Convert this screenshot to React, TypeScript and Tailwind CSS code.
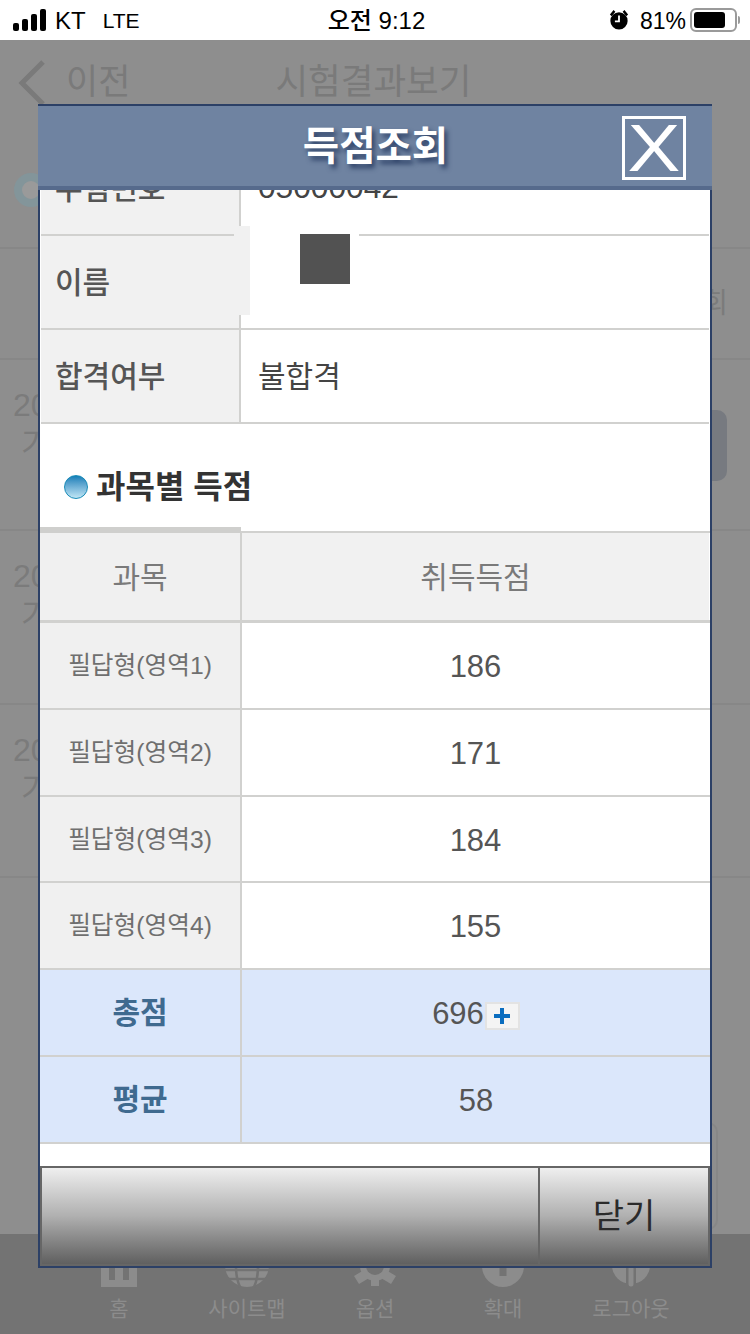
import React from "react";

const KR = '"Liberation Sans","Noto Sans CJK KR",sans-serif';

function Row({ label, value, h }: { label: string; value: React.ReactNode; h: string }) {
  return (
    <div className={`flex ${h} border-b-2 border-[#d1d1cf] mr-[1px] ml-[1px]`}>
      <div className="w-[200px] shrink-0 bg-[#f1f1f1] border-r-2 border-[#d1d1cf] flex items-center pl-[14px] text-[30px] font-medium text-[#555]">
        {label}
      </div>
      <div className="flex-1 flex items-center pl-[17px] text-[30px] text-[#444]">{value}</div>
    </div>
  );
}

function ScoreRow({ label, value, h }: { label: string; value: React.ReactNode; h: string }) {
  return (
    <div className={`flex ${h} border-b-2 border-[#d1d1cf]`}>
      <div className="w-[202px] shrink-0 bg-[#f0f0f0] border-r-2 border-[#d1d1cf] flex items-center justify-center pt-[1px] text-[24.7px] text-[#6f6f6f]">
        {label}
      </div>
      <div className="flex-1 flex items-center justify-center pt-[4px] text-[31px] text-[#555] bg-white mr-[1px]">{value}</div>
    </div>
  );
}

function TotalRow({ label, value, h }: { label: string; value: React.ReactNode; h: string }) {
  return (
    <div className={`flex ${h} border-b-2 border-[#d1d1cf] bg-[#dbe7fb]`}>
      <div className="w-[202px] shrink-0 border-r-2 border-[#d1d1cf] flex items-center justify-center text-[30px] font-bold text-[#3f6a8f]">
        {label}
      </div>
      <div className="flex-1 flex items-center justify-center pt-[4px] text-[31px] text-[#555]">{value}</div>
    </div>
  );
}

function BgRow({ h }: { h: string }) {
  return (
    <div className={`${h} border-b-2 border-[#878787] pl-[13px] pt-[29px] text-[#7b7b7b] leading-none`}>
      <div className="text-[32px]">2020</div>
      <div className="text-[32px] pl-[8px] mt-[7px]">기</div>
    </div>
  );
}

function NavItem({ label, children }: { label: string; children: React.ReactNode }) {
  return (
    <div className="w-[128px] flex flex-col items-center text-[21px] leading-none text-[#8c8c8c]">
      <svg width="48" height="48" viewBox="0 0 48 48" fill="#8c8c8c">{children}</svg>
      <span className="mt-[10px]">{label}</span>
    </div>
  );
}

export default function App() {
  return (
    <div className="relative w-[750px] h-[1334px] overflow-hidden flex flex-col bg-[#8e8e8e]" style={{ fontFamily: KR }}>
      {/* status bar */}
      <div className="h-[40px] shrink-0 bg-white flex items-center justify-between pl-[13px] pr-[10px] text-black text-[24px]">
        <div className="flex items-center w-[270px]">
          <svg width="36" height="22" viewBox="0 0 36 22" fill="#000">
            <rect x="0" y="14" width="6" height="8" rx="2" />
            <rect x="9" y="10" width="6" height="12" rx="2" />
            <rect x="18" y="5" width="6" height="17" rx="2" />
            <rect x="27" y="0" width="6" height="22" rx="2" />
          </svg>
          <span className="ml-[6px] mt-[2px]">KT</span>
          <span className="ml-[17px] mt-[2px] text-[21px]">LTE</span>
        </div>
        <div className="font-medium text-[24px] mt-[2px]">오전 9:12</div>
        <div className="flex items-center w-[270px] justify-end">
          <svg width="20" height="22" viewBox="0 0 22 24" fill="#000">
            <circle cx="11" cy="13" r="9.5" />
            <path d="M1 6 L5 1 L7 3 L3 8Z M21 6 L17 1 L15 3 L19 8Z" />
            <path d="M11 7 V13.5 H6.5" stroke="#fff" strokeWidth="2" fill="none" />
          </svg>
          <span className="ml-[11px] mt-[2px] text-[23px]">81%</span>
          <div className="ml-[4px] w-[47px] h-[24px] rounded-[6px] border-2 border-[#9a9a9a] p-[2px]">
            <div className="w-[31px] h-full rounded-[3px] bg-black" />
          </div>
          <div className="ml-[1px] w-[2px] h-[8px] rounded-r bg-[#9a9a9a]" />
        </div>
      </div>

      {/* dimmed page */}
      <div className="relative flex-1 flex flex-col">
        <div className="h-[85px] flex items-center text-[35px] text-[#7a7a7a]">
          <svg className="ml-[17px]" width="30" height="46" viewBox="0 0 30 46" fill="none" stroke="#7a7a7a" strokeWidth="5">
            <path d="M26 2 L5 23 L26 44" />
          </svg>
          <span className="ml-[19px]">이전</span>
          <span className="ml-[145px] text-[35.5px]">시험결과보기</span>
        </div>
        <div className="h-[122px] pl-[14px] pt-[48px]">
          <div className="w-[34px] h-[34px] rounded-full border-[8px] border-[#83959a] bg-[#9a9a9a]" />
        </div>
        <div className="h-[113px] border-y-2 border-[#878787] flex justify-end items-center pr-[22px] text-[28px] text-[#7b7b7b]">회</div>
        <BgRow h="h-[171px]" />
        <BgRow h="h-[174px]" />
        <BgRow h="h-[173px]" />
        <div className="absolute right-[23px] top-[370px] w-[40px] h-[71px] rounded-[10px] bg-[#777a80]" />
        <div className="absolute right-[32px] top-[1082px] w-[60px] h-[108px] rounded-[10px] border-2 border-[#878787]" />
        <div className="mt-auto h-[100px] shrink-0 bg-[#737373] flex pl-[55px] pt-[6px]">
          <NavItem label="홈">
            <path fillRule="evenodd" d="M6 18 L24 4 L42 18 V47 H6Z M14 24 V40 H20 V26 H28 V40 H34 V24Z" />
          </NavItem>
          <NavItem label="사이트맵">
            <circle cx="24" cy="25" r="22" />
            <path d="M2 30 H46 M2 39 H46 M17 4 C12 20 12 36 17 47 M31 4 C36 20 36 36 31 47" stroke="#737373" strokeWidth="2.5" fill="none" />
          </NavItem>
          <NavItem label="옵션">
            <circle cx="24" cy="26" r="15" />
            <path d="M20 4 H28 V46 H20Z M3 22 L8 14 L45 36 L40 44Z M45 22 L40 14 L3 36 L8 44Z" />
            <circle cx="24" cy="26" r="9" fill="#737373" />
          </NavItem>
          <NavItem label="확대">
            <circle cx="24" cy="26" r="21" />
            <path d="M24 10 V36 M14 23 H34" stroke="#737373" strokeWidth="7" fill="none" />
          </NavItem>
          <NavItem label="로그아웃">
            <circle cx="24" cy="25" r="19" />
            <path d="M24 12 V46" stroke="#737373" strokeWidth="10" fill="none" />
            <path d="M24 12 V44" stroke="#8c8c8c" strokeWidth="5" strokeLinecap="round" fill="none" />
          </NavItem>
        </div>
      </div>

      {/* modal */}
      <div className="absolute left-[38px] top-[104px] w-[674px] h-[1164px] flex flex-col border-x-2 border-b-2 border-[#2c4066] bg-white">
        <div className="relative z-10 -mx-[2px] h-[86px] shrink-0 border-t-2 border-b-4 border-t-[#2c4066] border-b-[#566a8c] bg-[#6f83a1] flex items-center justify-center">
          <span className="text-[39.5px] font-bold text-white [text-shadow:3px_4px_5px_#2c4066] mt-[2px] mr-[-1px]">득점조회</span>
          <div className="absolute left-[584px] top-[10px] w-[64px] h-[64px] border-[3px] border-white flex items-center justify-center overflow-hidden">
            <span className="text-[66px] leading-none text-white scale-x-[1.2]">X</span>
          </div>
        </div>

        <div className="relative flex-1 flex flex-col overflow-hidden">
          <div className="-mt-[48px]">
            <Row h="h-[94px]" label="수험번호" value={<span className="text-[31.7px]">05000042</span>} />
            <Row h="h-[94px]" label="이름" value="" />
            <Row h="h-[94px]" label="합격여부" value="불합격" />
          </div>
          <div className="h-[103px] shrink-0 flex items-center pl-[24px] pt-[22px]">
            <div className="w-[24px] h-[24px] rounded-full border border-[#1a8cb8] bg-gradient-to-b from-[#0b7fb8] to-[#bfe6f5]" />
            <span className="ml-[8px] mt-[1px] text-[32px] font-bold text-[#333]">과목별 득점</span>
          </div>
          <div className="relative">
            <div className="absolute left-0 top-0 w-[201px] h-[6px] bg-[#cfcfcd]" />
            <div className="h-[6px] border-b-2 border-[#d1d1cf]" />
            <div className="flex h-[90px] border-b-[3px] border-[#d1d1cf]">
              <div className="w-[202px] shrink-0 bg-[#f0f0f0] border-r-2 border-[#d1d1cf] flex items-center justify-center pt-[1px] text-[30px] text-[#7a7a7a]">과목</div>
              <div className="flex-1 bg-[#f1f1f1] flex items-center justify-center pt-[1px] text-[30px] text-[#7a7a7a] mr-[1px]">취득득점</div>
            </div>
            <ScoreRow h="h-[87px]" label="필답형(영역1)" value="186" />
            <ScoreRow h="h-[87px]" label="필답형(영역2)" value="171" />
            <ScoreRow h="h-[86px]" label="필답형(영역3)" value="184" />
            <ScoreRow h="h-[87px]" label="필답형(영역4)" value="155" />
            <TotalRow
              h="h-[87px]"
              label="총점"
              value={
                <>
                  <span className="mr-[1px]">696</span>
                  <span className="w-[35px] h-[28px] mt-[2px] bg-[#f4f4f4] border-2 border-[#e3e3e3] flex items-center justify-center">
                    <svg width="18" height="18" viewBox="0 0 18 18" fill="#0a6dbf">
                      <path d="M7 1 H11 V7 H17 V11 H11 V17 H7 V11 H1 V7 H7Z" />
                    </svg>
                  </span>
                </>
              }
            />
            <TotalRow h="h-[87px]" label="평균" value="58" />
          </div>

          {/* redaction patches over the name row */}
          <div className="absolute left-[194px] top-[36px] w-[16px] h-[89px] bg-[#f1f1f1]" />
          <div className="absolute left-[210px] top-[36px] w-[109px] h-[98px] bg-white" />
          <div className="absolute left-[260px] top-[44px] w-[50px] h-[50px] bg-[#525252]" />
        </div>

        <div className="h-[100px] shrink-0 border-t-2 border-[#666] flex px-[2px] pb-[2px] bg-[#666] text-[34px] text-[#2b2b2b]">
          <div className="w-[496px] bg-gradient-to-b from-[#efefef] via-[#b0b0b0] to-[#606060]" />
          <div className="w-[2px] bg-[#666]" />
          <div className="flex-1 bg-gradient-to-b from-[#efefef] via-[#b0b0b0] to-[#606060] flex items-center justify-center">닫기</div>
        </div>
      </div>
    </div>
  );
}
